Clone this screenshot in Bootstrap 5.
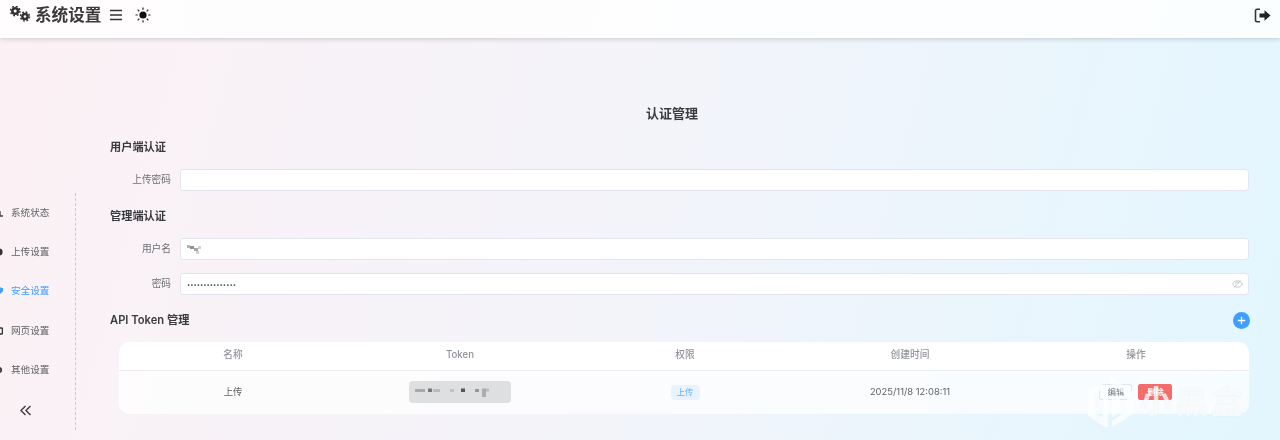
<!DOCTYPE html>
<html lang="zh-CN">
<head>
<meta charset="utf-8">
<title>系统设置</title>
<link href="https://cdn.jsdelivr.net/npm/bootstrap@5.3.0/dist/css/bootstrap.min.css" rel="stylesheet">
<style>
html,body{height:440px;overflow:hidden}
body{font-family:Inter,"Noto Sans CJK SC",sans-serif;color:#303133;background:linear-gradient(105deg,#fcf1f5 0%,#f3f4fa 50%,#e2f6fe 100%);position:relative}
.blur-soft{filter:blur(.3px)}
.top-bar{height:38px;padding:0 8px 8px 10px;background:rgba(255,255,255,.84);box-shadow:0 1px 5px rgba(0,0,0,.18);color:#3a3a3a;position:relative}
.top-title{font-size:16.6px;font-weight:600;line-height:20px;margin-right:8px;margin-left:3px}
.side-col{width:76px;height:237px;margin-top:155px;border-right:1px dashed #c9c9cd;overflow:hidden;flex:none;font-size:9.6px;color:#606266}
.side-item{height:39.4px;margin-left:-5px;white-space:nowrap;gap:4px}
.side-item.on{color:#409eff}
.side-fold{height:39px;padding-top:13px;padding-left:20px;color:#444}
.main-col{flex:1;padding:65px 31px 0 34px;min-width:0}
.page-h{font-size:13px;font-weight:600;line-height:20px;text-align:center;margin:0 0 0 -15px;padding-bottom:14px;color:#3a3b3e}
.sec-h{font-size:11.2px;font-weight:600;line-height:20px;margin:0;color:#3a3b3e}
.f-row{margin-top:12px;margin-bottom:13px;height:22px}
.f-row.last-f{margin-bottom:15px}
.sec-gap{padding-top:2px}
.f-lab{width:70px;text-align:right;padding-right:9px;font-size:9.7px;color:#6d6f74;flex:none}
.f-wrap{flex:1;position:relative;min-width:0}
.f-inp{height:22px;border:1px solid #e3e6ec;border-radius:3px;background:#fff;padding:0 6px;font-size:9.6px;box-shadow:none;color:#444}
.f-inp[type=password]{font-size:5.8px;letter-spacing:0}
.mosaic{position:absolute;left:7px;top:6px}
.eye{position:absolute;right:6px;top:6px}
.add-btn{width:17px;height:17px;border-radius:50%;background:#409eff;border:0;padding:0;flex:none;margin-right:-1px}
.tok-card{margin:12px 0 0 9px;border-radius:10px;overflow:hidden}
.tok-table{table-layout:fixed;width:100%;margin:0;font-size:9.4px;background:transparent;--bs-table-bg:transparent}
.tok-table th{height:28px;font-weight:500;font-size:9.7px;color:#909399;text-align:center;vertical-align:middle;padding:0;border-bottom:1px solid #edeef2;background:#fff;width:20%}
.tok-table th:nth-child(1){width:20.18%}
.tok-table th:nth-child(3){width:19.82%}
.tok-table td{height:44px;text-align:center;vertical-align:middle;padding:0;color:#606266;border:0;background:rgba(255,255,255,.72)}
.tok-pill{display:inline-flex;align-items:center;width:102px;height:22px;border-radius:4px;background:#dedfe1;padding-left:6px}
.perm-tag{display:inline-block;width:29px;height:15px;line-height:15px;border-radius:4px;background:#e8f3fe;color:#64aefc;font-size:8.2px}
.op-btn{display:inline-block;height:16px;line-height:14px;width:33px;border-radius:2px;font-size:8.2px;border:1px solid #e4e6ea;background:transparent;color:#777}
.op-btn.del{background:#f56c6c;border-color:#f56c6c;color:#fff;margin-left:6px;font-weight:600;width:34px}
.wm{position:absolute;left:1088px;top:377px;height:50px;color:rgba(255,255,255,.8);font-size:32px;font-weight:700;letter-spacing:3.5px;line-height:40px;pointer-events:none;gap:7px;text-shadow:0 0 1px rgba(120,130,140,.16)}
</style>
</head>
<body>
<div class="blur-soft">
<header class="top-bar d-flex align-items-center">
  <svg width="22" height="18" viewBox="0 0 22 18" aria-hidden="true"><circle cx="5.200" cy="5" r="2.800" fill="none" stroke="#333" stroke-width="2.600"/><circle cx="5.200" cy="5" r="4.700" fill="none" stroke="#333" stroke-width="1.500" stroke-dasharray="1.800 1.900"/><circle cx="15" cy="10.500" r="2.600" fill="none" stroke="#333" stroke-width="2.500"/><circle cx="15" cy="10.500" r="4.500" fill="none" stroke="#333" stroke-width="1.500" stroke-dasharray="1.800 1.750"/></svg>
  <span class="top-title">系统设置</span>
  <svg width="14" height="14" viewBox="0 0 14 14" aria-hidden="true" class="me-2"><path d="M1 2.500h12M1 7h12M1 11.500h12" stroke="#333" stroke-width="1.700" fill="none"/></svg>
  <svg width="16" height="16" viewBox="0 0 16 16" aria-hidden="true" class="ms-1"><circle cx="8" cy="8" r="3.600" fill="#111"/><path d="M8 .5v2.200M8 13.300v2.200M.5 8h2.200M13.300 8h2.200M2.700 2.700l1.600 1.600M11.700 11.700l1.600 1.600M2.700 13.300l1.600-1.600M11.700 4.300l1.600-1.600" stroke="#222" stroke-width="1.200"/></svg>
  <svg class="ms-auto" width="18" height="15" viewBox="0 0 18 15" aria-hidden="true"><path d="M6 1.200H3.200A1.700 1.700 0 0 0 1.500 2.900v9.200a1.700 1.700 0 0 0 1.700 1.700H6" fill="none" stroke="#333" stroke-width="1.600"/><path d="M5.500 5.600h5V2.300l6 5.200-6 5.200V9.400h-5z" fill="#222"/></svg>
</header>
<div class="d-flex">
  <aside class="side-col">
    <div class="side-item d-flex align-items-center"><svg width="8" height="8" viewBox="0 0 8 8" aria-hidden="true"><path d="M0 7h8M3 7V3h2v4" stroke="#444" stroke-width="1.400" fill="none"/></svg><span class="ms-1">系统状态</span></div>
    <div class="side-item d-flex align-items-center"><svg width="8" height="8" viewBox="0 0 8 8" aria-hidden="true"><circle cx="4" cy="4" r="3.600" fill="#333"/></svg><span class="ms-1">上传设置</span></div>
    <div class="side-item on d-flex align-items-center"><svg width="8" height="8" viewBox="0 0 8 8" aria-hidden="true"><path d="M4 0l4 1.200v3L4 8 0 4.200v-3z" fill="#409eff"/></svg><span class="ms-1">安全设置</span></div>
    <div class="side-item d-flex align-items-center"><svg width="8" height="8" viewBox="0 0 8 8" aria-hidden="true"><rect x="1" y="1" width="6.500" height="6" rx="1" fill="none" stroke="#333" stroke-width="1.500"/></svg><span class="ms-1">网页设置</span></div>
    <div class="side-item d-flex align-items-center"><svg width="8" height="8" viewBox="0 0 8 8" aria-hidden="true"><circle cx="4" cy="4" r="2.200" fill="none" stroke="#333" stroke-width="1.800"/></svg><span class="ms-1">其他设置</span></div>
    <div class="side-fold"><svg width="12" height="11" viewBox="0 0 12 11" aria-hidden="true"><path d="M5.500 1L1 5.500 5.500 10M10.500 1L6 5.500 10.500 10" fill="none" stroke="#444" stroke-width="1.500"/></svg></div>
  </aside>
  <main class="main-col">
    <h2 class="page-h">认证管理</h2>
    <h3 class="sec-h">用户端认证</h3>
    <div class="f-row d-flex align-items-center">
      <label class="f-lab" for="upw">上传密码</label>
      <div class="f-wrap"><input id="upw" class="form-control f-inp" type="text"></div>
    </div>
    <h3 class="sec-h sec-gap">管理端认证</h3>
    <div class="f-row d-flex align-items-center">
      <label class="f-lab" for="uname">用户名</label>
      <div class="f-wrap"><input id="uname" class="form-control f-inp" type="text">
        <svg class="mosaic" width="15" height="10" viewBox="0 0 15 10" aria-hidden="true"><path d="M0 1h3v3H0z" fill="#b5b5b8"/><path d="M3 2h4v3H3z" fill="#8f8f93"/><path d="M7 4h4v3H7z" fill="#a5a5a9"/><path d="M11 2h3v3h-3z" fill="#d2d2d5"/><path d="M9 7h3v3H9z" fill="#cfcfd2"/></svg>
      </div>
    </div>
    <div class="f-row last-f d-flex align-items-center">
      <label class="f-lab" for="pwd">密码</label>
      <div class="f-wrap"><input id="pwd" class="form-control f-inp" type="password" value="abcdefghijklmno">
        <svg class="eye" width="11" height="10" viewBox="0 0 11 10" aria-hidden="true"><path d="M.5 5C2 2.600 3.600 1.800 5.500 1.800S9 2.600 10.500 5C9 7.400 7.400 8.200 5.500 8.200S2 7.400.5 5zM2 8.500L9 1.500M3.500 5a2 2 0 0 1 3.500-1.300" fill="none" stroke="#bfc2c8" stroke-width=".9"/></svg>
      </div>
    </div>
    <div class="d-flex align-items-center justify-content-between">
      <h3 class="sec-h">API Token 管理</h3>
      <button type="button" class="add-btn d-flex align-items-center justify-content-center" aria-label="添加"><svg width="9" height="9" viewBox="0 0 9 9" aria-hidden="true"><path d="M4.500 .8v7.400M.8 4.500h7.400" stroke="#fff" stroke-width="1.300"/></svg></button>
    </div>
    <div class="tok-card">
      <table class="table tok-table">
        <thead><tr><th>名称</th><th>Token</th><th>权限</th><th>创建时间</th><th>操作</th></tr></thead>
        <tbody><tr>
          <td>上传</td>
          <td><span class="tok-pill"><svg width="82" height="12" viewBox="0 0 82 12" aria-hidden="true"><path d="M0 3h10v3H0z" fill="#a9a9ac"/><path d="M13 2.500h4v3.500h-4z" fill="#77777b"/><path d="M18 3h7v3h-7z" fill="#bcbcbf"/><path d="M35 3h4v3h-4z" fill="#c2c2c5"/><path d="M46 2.500h4v3.500h-4z" fill="#55555a"/><path d="M60 3h4v3h-4z" fill="#96969a"/><path d="M67 2.500h4v8.500h-4z" fill="#adadb0"/><path d="M71 2.500h3v3h-3z" fill="#bdbdc0"/></svg></span></td>
          <td><span class="perm-tag">上传</span></td>
          <td>2025/11/8 12:08:11</td>
          <td><span class="op-btn">编辑</span><span class="op-btn del">删除</span></td>
        </tr></tbody>
      </table>
    </div>
  </main>
</div>
</div>
<div class="wm d-flex align-items-center">
  <svg width="45" height="50" viewBox="0 0 45 50" aria-hidden="true"><path d="M0 14L15 6v6L6 17v20l9 3v-22l5-3v37L0 39zM23 0l22 15v22L24 50v-6l15-10V18L23 7zM24 18l8 3v14l-8 5z" fill="rgba(255,255,255,.7)"/></svg>
  <span>小黑盒</span>
</div>
</body>
</html>
